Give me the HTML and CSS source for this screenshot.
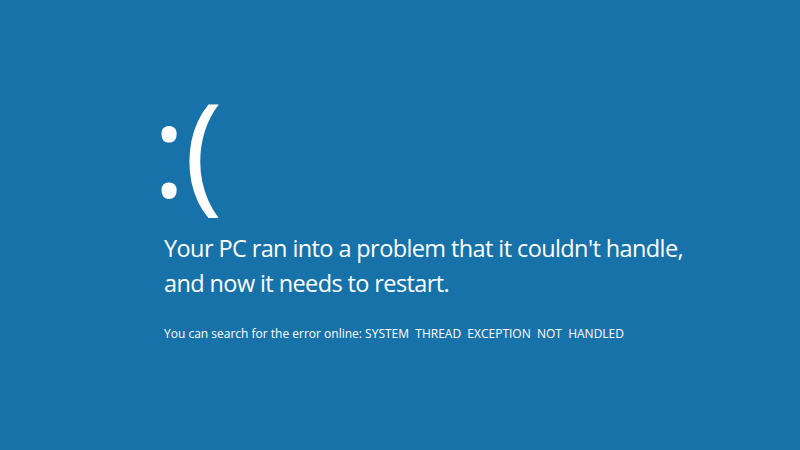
FILE: index.html
```html
<!doctype html>
<html lang="en">
    <head>
        <meta charset="utf-8">
        <title>Your PC ran into a problem</title>
        <link rel="stylesheet" href="styles.css">
    </head>
    <body>
        <main class="screen">
            <div class="face">:(</div>
            <p class="message">Your PC ran into a problem that it couldn't handle,<br>and now it needs to restart.</p>
            <p class="details">You can search for the error online: SYSTEM&nbsp; THREAD&nbsp; EXCEPTION&nbsp; NOT&nbsp; HANDLED</p>
        </main>
    </body>
</html>
```

FILE: styles.css
```css
* {
    margin: 0;
    padding: 0;
}

html, body {
    height: 100%;
}

body {
    background: #1772aa;
    color: #fff;
    font-family: "Open Sans", "Noto Sans", sans-serif;
    overflow: hidden;
}

.screen {
    display: flex;
    flex-direction: column;
    padding: 72px 0 0 164px;
}

.face {
    margin-left: -12px;
    font-size: 130px;
    font-weight: 400;
    line-height: 150px;
    letter-spacing: -2px;
}

.message {
    margin-top: 9px;
    font-size: 23.5px;
    font-weight: 400;
    line-height: 35px;
    letter-spacing: -0.6px;
}

.details {
    margin-top: 25px;
    font-size: 12px;
    line-height: 16px;
}
```
